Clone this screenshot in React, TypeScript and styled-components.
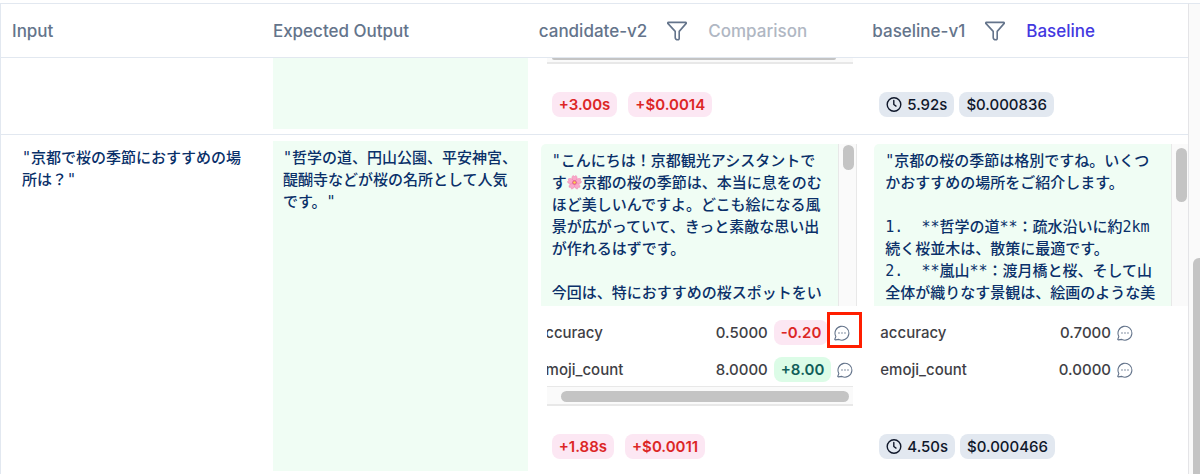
import React from "react";
import styled, { createGlobalStyle, css } from "styled-components";

const GlobalStyle = createGlobalStyle`
  * { box-sizing: border-box; }
  body {
    margin: 0;
    background: #ffffff;
    font-family: Inter, "Liberation Sans", sans-serif;
    color: #3f3f46;
  }
`;

const Page = styled.div`
  display: flex;
  height: 100vh;
  padding-top: 3px;
  overflow: hidden;
`;

const TablePane = styled.main`
  flex: 1;
  min-width: 0;
  overflow: hidden;
  border-top: 1px solid #e2e8f0;
  border-left: 1px solid #e2e8f0;
`;

const PageScrollbar = styled.div`
  flex: none;
  display: flex;
  flex-direction: column;
  justify-content: flex-end;
  width: 12px;
  padding-left: 4px;
  border-top: 1px solid #e2e8f0;
  border-left: 1px solid #e4e4e7;
  background: #fafafa;
`;

const PageThumb = styled.div`
  height: 46%;
  border-radius: 6px 0 0 0;
  background: #c4c4c4;
`;

const Table = styled.table`
  width: 100%;
  table-layout: fixed;
  border-collapse: separate;
  border-spacing: 0;
`;

const Col = styled.col<{ $width?: string }>`
  width: ${(p) => p.$width ?? "auto"};
`;

const HeadCell = styled.th`
  height: 54px;
  padding: 0 6px;
  border-bottom: 1px solid #e2e8f0;
  text-align: left;
  color: #64748b;
  font-size: 17px;
  font-weight: 500;
  line-height: 24px;
  white-space: nowrap;

  &:first-child { padding-left: 11px; }
`;

const RunHead = styled.div`
  display: flex;
  align-items: center;
`;

const IconButton = styled.button<{ $size: number }>`
  display: flex;
  flex: none;
  padding: 0;
  border: 0;
  background: none;
  color: #64748b;

  svg { width: ${(p) => p.$size}px; height: ${(p) => p.$size}px; }
`;

const FilterButton = styled(IconButton)`
  margin: 0 21px 0 20px;
`;

const RunTag = styled.span<{ $active?: boolean }>`
  color: ${(p) => (p.$active ? "#4338e0" : "#b0b7c3")};
`;

const Cell = styled.td`
  height: 1px;
  padding: 0;
  border-bottom: 1px solid #e2e8f0;
  vertical-align: top;
`;

const jsonText = css`
  color: #0a3069;
  font-family: "DejaVu Sans Mono", "Noto Sans CJK JP", monospace;
  font-size: 15px;
  font-weight: 500;
  line-height: 22px;
  white-space: pre-wrap;
`;

const InputText = styled.div`
  ${jsonText}
  padding: 12px 20px 0 21px;
`;

const ExpectedBox = styled.div<{ $continued?: boolean }>`
  ${jsonText}
  height: ${(p) => (p.$continued ? "71px" : "330px")};
  margin: ${(p) => (p.$continued ? "0 5px 5px 6px" : "6px 5px 5px 6px")};
  padding: 6px 10px;
  background: #f0fdf4;
`;

const OutputBox = styled.div`
  display: flex;
  height: 162px;
  margin: 9px 0 0 8px;
  overflow: hidden;
  border-radius: 5px 0 0 0;
`;

const OutputText = styled.div`
  ${jsonText}
  flex: 1;
  min-width: 0;
  padding: 6px 11px;
  background: #f0fdf4;
`;

const OutputScrollbar = styled.div<{ $wide?: boolean }>`
  flex: none;
  width: ${(p) => (p.$wide ? 17 : 19)}px;
  margin-right: ${(p) => (p.$wide ? 0 : 9)}px;
  padding: ${(p) => (p.$wide ? "4px 1px 0 4px" : "1px 3px 0 4px")};
  border: solid #e8e8e8;
  border-width: ${(p) => (p.$wide ? "0 0 0 1px" : "0 1px")};
  background: #fafafa;
`;

const OutputThumb = styled.div<{ $height: number }>`
  width: 11px;
  height: ${(p) => p.$height}px;
  border-radius: 6px;
  background: #c4c4c4;
`;

const ScoresFrame = styled.div`
  position: relative;
`;

const Scores = styled.div<{ $scrolled?: boolean }>`
  display: flex;
  flex-direction: column;
  gap: 12px;
  height: 80px;
  margin: ${(p) => (p.$scrolled ? "0 13px 0 14px" : "0 55px 0 14px")};
  padding-top: 14px;
  overflow: hidden;
`;

const ScoreRow = styled.div<{ $scrolled?: boolean }>`
  display: flex;
  align-items: center;
  height: 25px;
  margin-left: ${(p) => (p.$scrolled ? "-10px" : "0")};
  font-size: 15px;
  font-weight: 500;
  line-height: 20px;
`;

const ScoreName = styled.span`
  flex: 1;
`;

const CommentButton = styled(IconButton)<{ $shift?: boolean }>`
  margin: 0 ${(p) => (p.$shift ? 3 : 0)}px 0 6px;
`;

const Highlight = styled.span`
  position: absolute;
  top: 6px;
  right: 4px;
  width: 35px;
  height: 36px;
  border: 3px solid #ff1e00;
  pointer-events: none;
`;

const Delta = styled.span<{ $tone: "bad" | "good" }>`
  display: inline-flex;
  align-items: center;
  height: 25px;
  padding: 0 7px;
  border-radius: 8px;
  font-size: 15px;
  font-weight: 600;
  line-height: 20px;
  color: ${(p) => (p.$tone === "bad" ? "#dc2626" : "#115e59")};
  background: ${(p) => (p.$tone === "bad" ? "#fce7f3" : "#dcfce7")};
`;

const ScoreDelta = styled(Delta)`
  margin-left: 6px;
`;

const Stat = styled.span`
  display: inline-flex;
  align-items: center;
  gap: 5px;
  height: 25px;
  padding: 0 7px;
  border-radius: 8px;
  font-size: 15px;
  font-weight: 500;
  line-height: 20px;
  color: #0f172a;
  background: #e2e8f0;
`;

const Chips = styled.div<{ $gap: number; $top: number }>`
  display: flex;
  gap: ${(p) => p.$gap}px;
  margin: ${(p) => p.$top}px 0 0 13px;
  padding-left: ${(p) => (p.$gap > 8 ? 6 : 0)}px;
`;

const HScrollbar = styled.div<{ $cropped?: boolean }>`
  height: ${(p) => (p.$cropped ? 6 : 20)}px;
  margin: 0 13px 0 14px;
  padding: ${(p) => (p.$cropped ? "0 17px 0 5px" : "4px 4px 0 14px")};
  border: solid #e8e8e8;
  border-width: ${(p) => (p.$cropped ? "0 0 2px" : "1px 0 2px")};
  background: #fafafa;
`;

const HThumb = styled.div<{ $cropped?: boolean }>`
  height: ${(p) => (p.$cropped ? 2 : 11)}px;
  border-radius: ${(p) => (p.$cropped ? "0 0 6px 6px" : "6px")};
  background: #c4c4c4;
`;

const BlossomSvg = styled.svg`
  width: 15px;
  height: 15px;
  vertical-align: -2px;
`;

const Funnel = () => (
  <svg viewBox="0 0 20 20" fill="none" stroke="currentColor" strokeWidth="1.6" strokeLinejoin="round" aria-hidden="true">
    <path d="M1.300 1.400h17.400c.6 0 .8.6.5 1L12.200 10.400v7.200a1.200 1.200 0 0 1-1.200 1.200c-1.600 0-2.800-1-2.800-2.300v-6.100L.8 2.400c-.3-.4-.1-1 .5-1z" />
  </svg>
);

const CommentIcon = () => (
  <svg viewBox="0 0 24 24" fill="none" stroke="currentColor" strokeWidth="1.600" strokeLinecap="round" strokeLinejoin="round" aria-hidden="true">
    <path d="M7.300 21.600A10.400 10.400 0 1 0 2.800 17.300L1.200 21.300Q1 22.400 2.200 22.300Z" />
    <path d="M7.500 12h.01M12 12h.01M16.500 12h.01" strokeWidth="2.200" />
  </svg>
);

const ClockIcon = () => (
  <svg width="16" height="16" viewBox="0 0 16 16" fill="none" stroke="currentColor" strokeWidth="1.400" strokeLinecap="round" strokeLinejoin="round" aria-hidden="true">
    <circle cx="8" cy="7.500" r="6.800" />
    <path d="M7.800 3.500v4l2.200 1.600" />
  </svg>
);

const Blossom = () => (
  <BlossomSvg viewBox="0 0 20 20" role="img" aria-label="桜の花">
    {[0, 72, 144, 216, 288].map((angle) => (
      <path
        key={angle}
        transform={`rotate(${angle} 10 10)`}
        d="M10 10C6.500 7.500 5.300 3 8 .6L10 2l2-1.400c2.700 2.400 1.500 6.900-2 9.400z"
        fill="#f9a8c9"
        stroke="#ef7fae"
        strokeWidth=".6"
      />
    ))}
    <circle cx="10" cy="10" r="3" fill="#e2558a" />
    <circle cx="10" cy="10" r="1.700" fill="#fcd34d" />
  </BlossomSvg>
);

const RunHeader = ({ name, tag, active }: { name: string; tag: string; active?: boolean }) => (
  <RunHead>
    {name}
    <FilterButton $size={20} type="button" aria-label={`Filter ${name}`}>
      <Funnel />
    </FilterButton>
    <RunTag $active={active}>{tag}</RunTag>
  </RunHead>
);

const Comment = ({ shift }: { shift?: boolean }) => (
  <CommentButton $size={16} $shift={shift} type="button" aria-label="View comment">
    <CommentIcon />
  </CommentButton>
);

const Stats = ({ latency, cost, top }: { latency: string; cost: string; top: number }) => (
  <Chips $gap={5} $top={top}>
    <Stat><ClockIcon />{latency}</Stat>
    <Stat>{cost}</Stat>
  </Chips>
);

const Deltas = ({ latency, cost, top }: { latency: string; cost: string; top: number }) => (
  <Chips $gap={11} $top={top}>
    <Delta $tone="bad">{latency}</Delta>
    <Delta $tone="bad">{cost}</Delta>
  </Chips>
);

const baselineOutput = `"京都の桜の季節は格別ですね。いくつかおすすめの場所をご紹介します。

1.  **哲学の道**：疏水沿いに約2km続く桜並木は、散策に最適です。
2.  **嵐山**：渡月橋と桜、そして山全体が織りなす景観は、絵画のような美`;

export default function App() {
  return (
    <>
      <GlobalStyle />
      <Page lang="ja">
        <TablePane>
          <Table>
            <colgroup>
              <Col $width="22.4%" />
              <Col $width="22.4%" />
              <Col $width="28.1%" />
              <Col />
            </colgroup>
            <thead>
              <tr>
                <HeadCell scope="col">Input</HeadCell>
                <HeadCell scope="col">Expected Output</HeadCell>
                <HeadCell scope="col"><RunHeader name="candidate-v2" tag="Comparison" /></HeadCell>
                <HeadCell scope="col"><RunHeader name="baseline-v1" tag="Baseline" active /></HeadCell>
              </tr>
            </thead>
            <tbody>
              <tr>
                <Cell />
                <Cell><ExpectedBox $continued /></Cell>
                <Cell>
                  <HScrollbar $cropped><HThumb $cropped /></HScrollbar>
                  <Deltas latency="+3.00s" cost="+$0.0014" top={28} />
                </Cell>
                <Cell><Stats latency="5.92s" cost="$0.000836" top={34} /></Cell>
              </tr>
              <tr>
                <Cell><InputText>"京都で桜の季節におすすめの場所は？"</InputText></Cell>
                <Cell>
                  <ExpectedBox>"哲学の道、円山公園、平安神宮、醍醐寺などが桜の名所として人気です。"</ExpectedBox>
                </Cell>
                <Cell>
                  <OutputBox>
                    <OutputText>
                      "こんにちは！京都観光アシスタントです<Blossom />京都の桜の季節は、本当に息をのむほど美しいんですよ。どこも絵になる風景が広がっていて、きっと素敵な思い出が作れるはずです。{"\n\n"}今回は、特におすすめの桜スポットをい
                    </OutputText>
                    <OutputScrollbar><OutputThumb $height={25} /></OutputScrollbar>
                  </OutputBox>
                  <ScoresFrame>
                    <Scores $scrolled>
                      <ScoreRow $scrolled>
                        <ScoreName>accuracy</ScoreName>
                        0.5000
                        <ScoreDelta $tone="bad">-0.20</ScoreDelta>
                        <Comment shift />
                      </ScoreRow>
                      <ScoreRow $scrolled>
                        <ScoreName>emoji_count</ScoreName>
                        8.0000
                        <ScoreDelta $tone="good">+8.00</ScoreDelta>
                        <Comment />
                      </ScoreRow>
                    </Scores>
                    <Highlight />
                  </ScoresFrame>
                  <HScrollbar><HThumb /></HScrollbar>
                  <Deltas latency="+1.88s" cost="+$0.0011" top={28} />
                </Cell>
                <Cell>
                  <OutputBox>
                    <OutputText>{baselineOutput}</OutputText>
                    <OutputScrollbar $wide><OutputThumb $height={54} /></OutputScrollbar>
                  </OutputBox>
                  <Scores>
                    <ScoreRow><ScoreName>accuracy</ScoreName>0.7000<Comment /></ScoreRow>
                    <ScoreRow><ScoreName>emoji_count</ScoreName>0.0000<Comment /></ScoreRow>
                  </Scores>
                  <Stats latency="4.50s" cost="$0.000466" top={48} />
                </Cell>
              </tr>
            </tbody>
          </Table>
        </TablePane>
        <PageScrollbar><PageThumb /></PageScrollbar>
      </Page>
    </>
  );
}
